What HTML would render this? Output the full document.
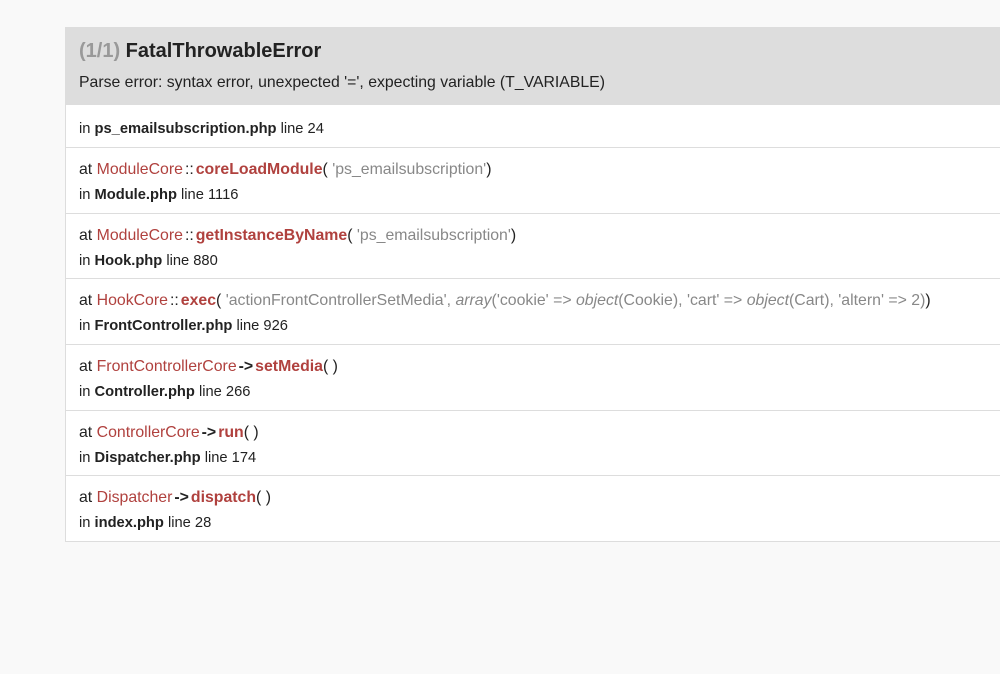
<!DOCTYPE html>
<html><head><meta charset="utf-8"><style>
html,body{margin:0;padding:0;background:#f9f9f9;width:1000px;height:674px;overflow:hidden}
body{font-family:"Liberation Sans",Arial,sans-serif;color:#222}
.box{position:absolute;left:65px;top:27px;width:960px;border:1px solid #ddd;border-top:none;border-right:none;background:#fff}
.hd{background:#ddd;height:77px;padding:0 0 0 13px;box-sizing:border-box}
.t{font-size:20px;font-weight:bold;padding-top:12px;line-height:24px}
.t span{color:#999}
.m{font-size:15.8px;margin-top:10px;line-height:20px}
.row{border-top:1px solid #ddd;padding-left:13px;font-size:14.7px;box-sizing:border-box}
.r1{height:43px;line-height:48px}
.r{height:65.7px;padding-top:9px}
.r div{line-height:25px;height:25px}
.r div.l{font-size:15.85px;height:26px}
.c{color:#b0413e}
.f{color:#b0413e;font-weight:bold}
.a{color:#888}
b{font-weight:bold;color:#222}
.s{margin:0 2px}
</style></head><body>
<div class="box">
<div class="hd"><div class="t"><span>(1/1)</span> FatalThrowableError</div>
<div class="m">Parse error: syntax error, unexpected '=', expecting variable (T_VARIABLE)</div></div>
<div class="row r1">in <b>ps_emailsubscription.php</b> line 24</div>
<div class="row r"><div class="l">at <span class="c">ModuleCore</span><span class="s">::</span><span class="f">coreLoadModule</span>( <span class="a">'ps_emailsubscription'</span>)</div><div>in <b>Module.php</b> line 1116</div></div>
<div class="row r"><div class="l">at <span class="c">ModuleCore</span><span class="s">::</span><span class="f">getInstanceByName</span>( <span class="a">'ps_emailsubscription'</span>)</div><div>in <b>Hook.php</b> line 880</div></div>
<div class="row r"><div class="l">at <span class="c">HookCore</span><span class="s">::</span><span class="f">exec</span>( <span class="a">'actionFrontControllerSetMedia', <i>array</i>('cookie' =&gt; <i>object</i>(Cookie), 'cart' =&gt; <i>object</i>(Cart), 'altern' =&gt; 2)</span>)</div><div>in <b>FrontController.php</b> line 926</div></div>
<div class="row r"><div class="l">at <span class="c">FrontControllerCore</span><b class="s">-&gt;</b><span class="f">setMedia</span>( )</div><div>in <b>Controller.php</b> line 266</div></div>
<div class="row r"><div class="l">at <span class="c">ControllerCore</span><b class="s">-&gt;</b><span class="f">run</span>( )</div><div>in <b>Dispatcher.php</b> line 174</div></div>
<div class="row r"><div class="l">at <span class="c">Dispatcher</span><b class="s">-&gt;</b><span class="f">dispatch</span>( )</div><div>in <b>index.php</b> line 28</div></div>
</div>
</body></html>
